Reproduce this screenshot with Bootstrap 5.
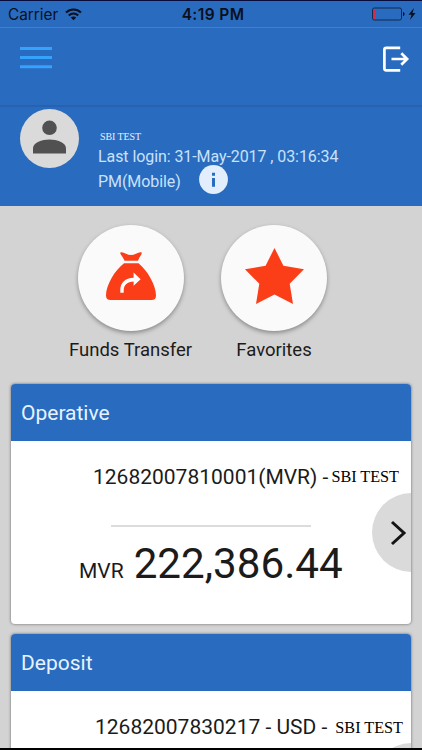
<!DOCTYPE html>
<html lang="en">
<head>
<meta charset="utf-8">
<meta name="viewport" content="width=device-width, initial-scale=1">
<title>Accounts</title>
<link href="https://cdn.jsdelivr.net/npm/bootstrap@5.3.0/dist/css/bootstrap.min.css" rel="stylesheet">
<style>
:root{--brand:#296bbf}
body{font-family:Roboto,sans-serif;background:#d3d3d3;color:#1b1b1b}
.screen{height:750px;border-top:1px solid #080c3c;border-bottom:2px solid #000}
.screen svg{display:block;flex:none}
.brand{background:var(--brand)}
.statusbar{height:27px;padding:0 6px 0 9px;font:15.5px/28px Inter,sans-serif;color:#0a101d;border-bottom:1px solid #4a7cbf}
.side{flex:1 1 0}
.carrier{font-size:15.3px;margin-left:-1px;padding-top:2px}
.wifi{margin-left:7px}
.clock{font-weight:600;letter-spacing:.4px;padding:2px 0 0 1px}
.topbar{height:79px;padding:18px 12px 0 20px;border-bottom:2px solid #2662b0}
.profile{height:99px;padding:2px 20px 0;color:#c8e2fa}
.avatar{width:59px;height:59px;background:#dadada}
.person{margin-top:7px}
.holder{font:10px/12px "Liberation Serif",serif;margin:22px 0 0 2px;color:#e4f0fd}
.login{font-size:16px;line-height:25px;margin-left:19px;letter-spacing:-.08px}
.login-line{height:25px;margin-top:1px}
.info{margin-left:18px;margin-top:-4px}
.shortcuts{padding:19px 0 0 69px}
.shortcut{width:123px}
.shortcut + .shortcut{margin-left:20.5px}
.disc{width:106px;height:106px;padding-bottom:4px;background:#fafafa;box-shadow:0 2px 4px rgba(0,0,0,.35)}
.caption-text{font-size:18.5px;line-height:22px;margin-top:8px}
.accounts{padding-top:23px}
.account{margin:0 11px 10px;border:0;border-radius:4px;height:240px;box-shadow:0 0 3px rgba(0,0,0,.55);overflow:hidden;color:#1b1b1b}
.account-head{height:57px;padding-left:10px;font-size:21px;line-height:59px;color:#e6f3ff}
.number{font-size:21px;line-height:24px;margin-top:24px;padding-left:82px}
.number-usd{padding-left:84px}
.owner{font:16.2px/24px "Liberation Serif",serif;color:#000;margin-left:3px}
.number-usd .owner{margin-left:8px;padding-top:1px}
.divide{width:200px;height:2px;margin:36px 0 0 100px;background:#dcdcdc}
.balance{margin:12px 0 0 68px}
.currency{font-size:21px}
.amount{font-size:42.2px;line-height:50px;margin-left:10px}
.next{right:-40px;top:109px;width:79px;height:79px;background:#dadada;padding-left:18px}
</style>
<script src="https://cdn.jsdelivr.net/npm/bootstrap@5.3.0/dist/js/bootstrap.bundle.min.js"></script>
</head>
<body>
<div class="screen overflow-hidden text-nowrap">
  <header>
    <div class="statusbar brand d-flex align-items-center">
      <div class="side d-flex align-items-center">
        <span class="carrier">Carrier</span>
        <svg class="wifi" width="17" height="13" viewBox="0 0 17 13" fill="none" stroke="#0a101d" stroke-width="2.1"><path d="M1 4.6C5.2.4 11.8.4 16 4.6M3.8 7.5c2.7-2.6 6.7-2.6 9.4 0"/><path d="M8.500 12.200 5.800 9.500c1.500-1.400 3.900-1.400 5.400 0z" fill="#0a101d" stroke="none"/></svg>
      </div>
      <span class="clock">4:19 PM</span>
      <div class="side d-flex align-items-center justify-content-end">
        <svg width="44" height="14" viewBox="0 0 44 14"><rect x=".5" y="1" width="29" height="12" rx="1.800" fill="none" stroke="#14294c"/><path d="M1.200 2h1.800v10H1.200z" fill="#d22b4b"/><path d="M31 5c2 .3 2 3.700 0 4z" fill="#0a101d"/><path d="M42 1 36.500 7.800h3L38 13l5.500-6.900h-3z" fill="#0a101d"/></svg>
      </div>
    </div>
    <nav class="topbar brand d-flex justify-content-between align-items-start">
      <svg width="32" height="24" viewBox="0 0 32 24" fill="#35a2fb" role="img" aria-label="Menu"><path d="M0 1h32v3H0zM0 10h32v3H0zM0 19.200h32v3H0z"/></svg>
      <svg width="28" height="27" viewBox="0 0 28 27" fill="none" stroke="#fff" stroke-width="2.700" role="img" aria-label="Log out"><path d="M18.200 1.900H4.200q-1.800 0-1.800 1.800v18.800q0 1.800 1.800 1.800h14M9.500 13H26M19.300 7.200l5.800 5.800-5.800 5.800"/></svg>
    </nav>
  </header>
  <section class="profile brand d-flex">
    <div class="avatar rounded-circle flex-shrink-0 d-flex justify-content-center">
      <svg class="person" width="34" height="42" viewBox="0 0 34 42" fill="#515151"><circle cx="16.500" cy="11.800" r="7.300"/><path d="M0 37.500v-5C0 26.200 9 23.500 16.500 23.500s16.500 2.700 16.500 9v5z"/></svg>
    </div>
    <div class="login">
      <div class="holder">SBI TEST</div>
      <div class="login-line">Last login: 31-May-2017 , 03:16:34</div>
      <div class="d-flex"><span>PM(Mobile)</span>
        <svg class="info" width="29" height="29" viewBox="0 0 29 29"><circle cx="14.500" cy="14.500" r="14.400" fill="#e2eefb"/><path d="M13 7.700h3v3h-3zM13 13h3v8.700h-3z" fill="#296bbf"/></svg>
      </div>
    </div>
  </section>
  <section class="shortcuts d-flex">
    <div class="shortcut d-flex flex-column align-items-center">
      <div class="disc rounded-circle d-flex align-items-center justify-content-center">
        <svg width="50" height="48" viewBox="0 0 50 48" fill="#fb3e18"><path d="M14.500.5C17-.8 21 3.100 25 3.100S33-.8 35.500.500C37 1.300 32.500 6 32 8.800H18.500C18 6 13 1.300 14.500.5zM18 11.300h14.500C41 18 50 33 50 43.500q0 4.500-4.500 4.500h-41Q0 48 0 43.500C0 33 9 18 18 11.300z"/><path d="M14.300 40.800V38c0-7 5-12.200 13.300-12.200V20.500l7 6.700-7 6.500v-4.300c-6.300.1-9.900 3.500-9.900 9.100v2.300z" fill="#fff"/></svg>
      </div>
      <div class="caption-text">Funds Transfer</div>
    </div>
    <div class="shortcut d-flex flex-column align-items-center">
      <div class="disc rounded-circle d-flex align-items-center justify-content-center">
        <svg width="59" height="56" viewBox="0 0 59 56" fill="#fb3e18"><path d="M29.500 0 38.400 17.700 59 21.300 44.700 35.700 48 56 29.500 46.600 11 56 14.300 35.700 0 21.300 20.600 17.700z"/></svg>
      </div>
      <div class="caption-text">Favorites</div>
    </div>
  </section>
  <main class="accounts">
    <article class="account card">
      <div class="account-head brand">Operative</div>
      <div class="number d-flex"><span>12682007810001(MVR) -</span><span class="owner">SBI TEST</span></div>
      <div class="divide"></div>
      <div class="balance d-flex align-items-baseline"><span class="currency">MVR</span><span class="amount">222,386.44</span></div>
      <div class="next position-absolute rounded-circle d-flex align-items-center">
        <svg width="17" height="28" viewBox="0 0 17 28" fill="none" stroke="#151515" stroke-width="3"><path d="m2 3 12 11L2 25"/></svg>
      </div>
    </article>
    <article class="account card">
      <div class="account-head brand">Deposit</div>
      <div class="number number-usd d-flex"><span>12682007830217 - USD -</span><span class="owner">SBI TEST</span></div>
      <div class="next position-absolute rounded-circle"></div>
    </article>
  </main>
</div>
</body>
</html>
